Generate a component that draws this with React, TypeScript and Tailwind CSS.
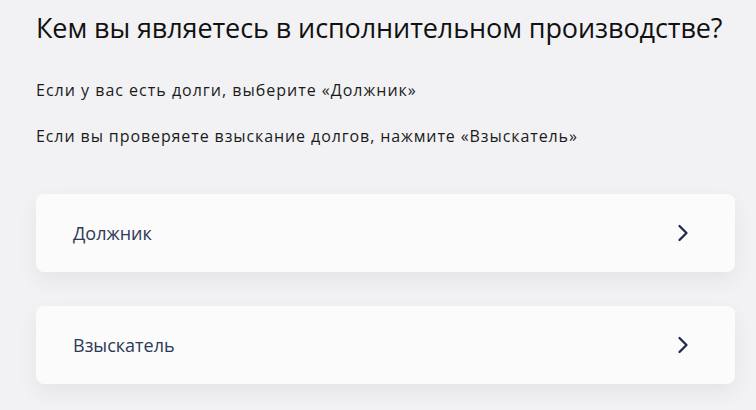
const options = ['Должник', 'Взыскатель'];

function Chevron() {
  return (
    <svg width="12" height="20" viewBox="0 0 12 20" fill="none" className="text-[#1e2a4a]">
      <polyline
        points="2.5,3 9.5,10 2.5,17"
        stroke="currentColor"
        strokeWidth="2.3"
        strokeLinecap="round"
        strokeLinejoin="round"
      />
    </svg>
  );
}

export default function App() {
  return (
    <div
      className="w-[756px] h-[410px] overflow-hidden bg-[#f2f2f4] pl-[36px] pr-[21px] pt-[10px]"
      style={{ fontFamily: '"Open Sans", "Noto Sans", sans-serif' }}
    >
      <h1 className="text-[27px] font-medium leading-[36px] text-[#111111] tracking-[-0.1px]">
        Кем вы являетесь в исполнительном производстве?
      </h1>

      <p className="mt-[33px] text-[16px] leading-[22px] tracking-[1px] text-[#1b1b1b]">
        Если у вас есть долги, выберите «Должник»
      </p>
      <p className="mt-[24px] text-[16px] leading-[22px] tracking-[0.9px] text-[#1b1b1b]">
        Если вы проверяете взыскание долгов, нажмите «Взыскатель»
      </p>

      <div className="mt-[47px] flex flex-col gap-[34px]">
        {options.map((label) => (
          <button
            key={label}
            className="flex h-[78px] items-center justify-between rounded-[8px] bg-[#fbfbfb] pl-[37px] pr-[46px] text-left shadow-[0_8px_20px_rgba(40,50,80,0.07)]"
          >
            <span className="text-[18px] leading-[24px] text-[#2c3a56]">{label}</span>
            <Chevron />
          </button>
        ))}
      </div>
    </div>
  );
}
